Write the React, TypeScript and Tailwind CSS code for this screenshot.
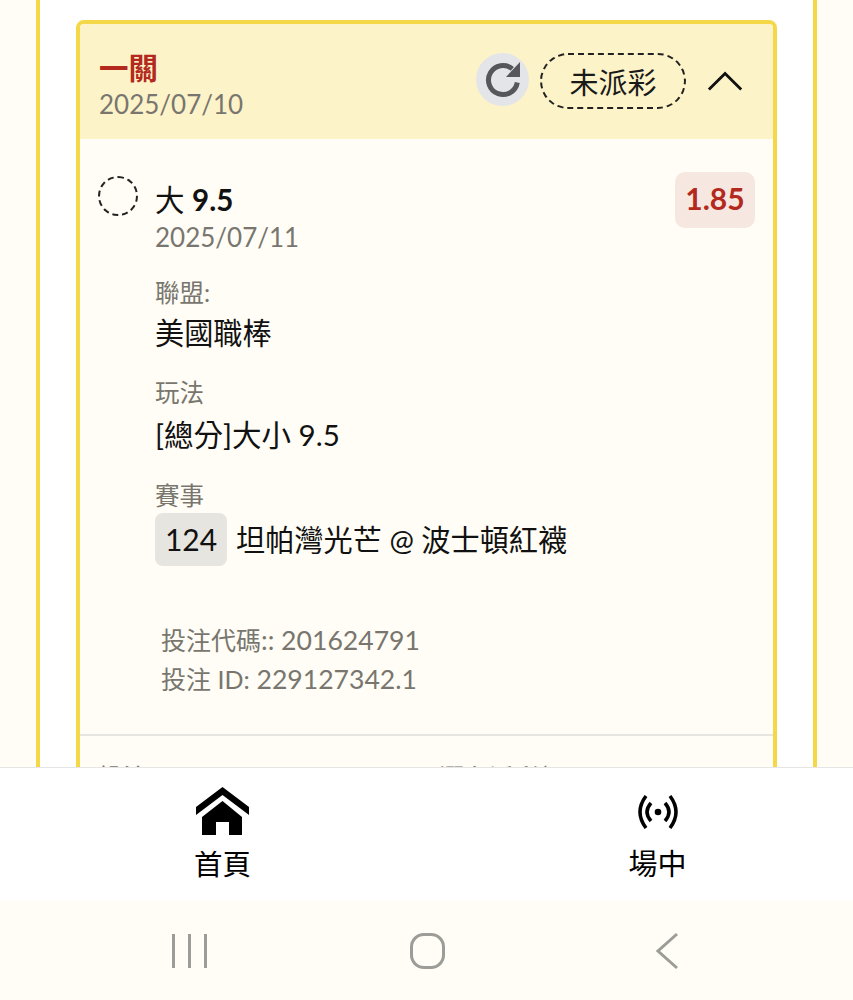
import React from 'react';

const FONT = "font-['Lato','Noto_Sans_CJK_TC',sans-serif]";

const Field: React.FC<{ label: string; className?: string; children: React.ReactNode }> = ({
  label,
  className,
  children,
}) => {
  return (
    <div className={className}>
      <div className="text-[24.5px] leading-[30px] text-[#78766f]">{label}</div>
      {children}
    </div>
  );
};

const App: React.FC = () => {
  return (
    <div className={`${FONT} h-[1000px] w-[853px] flex flex-col overflow-hidden bg-[#fffdf5]`}>
      {/* scroll area */}
      <div className="h-[767px] shrink-0 overflow-hidden px-[36px]">
        <div className="h-[900px] border-x-[4px] border-[#f5d848] bg-white px-[36px] pt-[20px]">
          <div className="rounded-t-[8px] border-[4px] border-[#f5d848] bg-[#fffdf5]">
            <div className="h-[115px] bg-[#fdf3c8] flex items-start justify-between pl-[19px] pr-[28px] rounded-t-[4px]">
              <div className="pt-[26px]">
                <div className="text-[29.5px] leading-[36px] font-bold text-[#b3291d]">一關</div>
                <div className="mt-[1px] text-[26px] leading-[34px] text-[#78766f]">2025/07/10</div>
              </div>
              <div className="flex items-center pt-[29px]">
                <div className="mb-[3px] w-[53px] h-[53px] rounded-full bg-[#e3e5e8]">
                  <svg viewBox="0 0 53 53" className="w-[53px] h-[53px]">
                    <path d="M41.3 29.5 A14.5 14.5 0 1 1 36.3 15.9" className="fill-none stroke-[#55575a] stroke-[5]" />
                    <path d="M44 9 L44 24 L30 24 Z" className="fill-[#55575a]" />
                  </svg>
                </div>
                <div className="ml-[11px] w-[146px] h-[56px] rounded-full border-2 border-dashed border-[#222] flex items-center justify-center text-[29px] leading-[40px] pt-[3px] text-[#1a1a1a]">
                  未派彩
                </div>
                <svg viewBox="0 0 40 24" className="ml-[21px] w-[38px] h-[24px] fill-none stroke-[#111] stroke-[3]">
                  <path d="M2 21 L19 4 L36 21" />
                </svg>
              </div>
            </div>

            <div className="relative pl-[18px] pr-[18px] pt-[33px] h-[700px]">
              <div className="flex items-start justify-between">
                <div className="flex items-start">
                  <div className="mt-[4px] w-[40px] h-[40px] rounded-full border-2 border-dashed border-[#222]" />
                  <div className="ml-[17px] pt-[8px]">
                    <div className="text-[29.5px] leading-[40px] text-[#111]">
                      大 <span className="font-bold">9.5</span>
                    </div>
                    <div className="mt-[1px] text-[26px] leading-[32px] text-[#78766f]">2025/07/11</div>
                  </div>
                </div>
                <div className="w-[80px] h-[56px] pb-[3px] rounded-[10px] bg-[#f6e8e0] flex items-center justify-center text-[30px] font-bold text-[#b3291d]">
                  1.85
                </div>
              </div>

              <div className="pl-[57px] text-[#111]">
                <Field label="聯盟:" className="mt-[25px]">
                  <div className="text-[29.2px] leading-[44px] mt-[3px]">美國職棒</div>
                </Field>
                <Field label="玩法" className="mt-[23px]">
                  <div className="text-[29.5px] leading-[44px] mt-[5px]">[總分]大小 9.5</div>
                </Field>
                <Field label="賽事" className="mt-[24px]">
                  <div className="flex items-center mt-[2px]">
                    <div className="w-[72px] h-[53px] rounded-[8px] bg-[#e6e5e0] flex items-center justify-center text-[30px]">
                      124
                    </div>
                    <div className="ml-[9px] text-[29.2px] leading-[53px]">坦帕灣光芒 @ 波士頓紅襪</div>
                  </div>
                </Field>
                <div className="mt-[55px] pl-[6px] text-[26.6px] leading-[39px] text-[#78766f]">
                  <div>
                    <span className="text-[25px]">投注代碼</span>:: 201624791
                  </div>
                  <div>
                    <span className="text-[25px]">投注 ID:</span> 229127342.1
                  </div>
                </div>
              </div>

              <div className="mt-[35px] -mx-[18px] border-t-2 border-[#e6e5e0]" />
              <div className="mt-[24px] flex text-[25px] leading-[34px] text-[#78766f]">
                <div className="w-[341px]">投注</div>
                <div>潛在派彩額</div>
              </div>
            </div>
          </div>
        </div>
      </div>

      {/* bottom nav */}
      <div className="h-[133px] shrink-0 bg-white border-t border-[#e5e5e5] flex">
        <div className="w-[444px] pl-[1px] flex flex-col items-center pt-[19px]">
          <svg viewBox="0 0 53 48" className="w-[53px] h-[48px] fill-black">
            <path d="M26.5 0 L53 20 L53 28 L26.5 8 L0 28 L0 20 Z" />
            <path d="M26.5 14 L46 30 L46 48 L33 48 L33 35 L20 35 L20 48 L6 48 L6 30 Z" />
          </svg>
          <div className="mt-[9px] text-[28.5px] leading-[40px] text-black">首頁</div>
        </div>
        <div className="flex-1 flex flex-col items-center pt-[27px] pl-[18px]">
          <svg viewBox="0 0 40 34" className="w-[40px] h-[34px] fill-none stroke-black stroke-[3.5]">
            <circle cx="20" cy="17" r="3.3" className="fill-black stroke-none" />
            <path d="M13 8 Q5 17 13 26" />
            <path d="M27 8 Q35 17 27 26" />
            <path d="M8 1 Q-4 17 8 33" />
            <path d="M32 1 Q44 17 32 33" />
          </svg>
          <div className="mt-[15px] text-[29px] leading-[40px] text-black">場中</div>
        </div>
      </div>

      {/* android system bar */}
      <div className="flex-1 bg-[#fffdf5] flex items-center">
        <div className="w-[207px] flex justify-end gap-[13px] pt-[2px]">
          <div className="w-[3px] h-[34px] bg-[#9c9c98]" />
          <div className="w-[3px] h-[34px] bg-[#9c9c98]" />
          <div className="w-[3px] h-[34px] bg-[#9c9c98]" />
        </div>
        <div className="ml-[203px] mt-[2px] w-[35px] h-[36px] rounded-[14px] border-[3px] border-[#9c9c98]" />
        <svg viewBox="0 0 24 38" className="ml-[210px] mt-[2px] w-[24px] h-[38px] fill-none stroke-[#9c9c98] stroke-[3]">
          <path d="M22 2 L3 19 L22 36" />
        </svg>
      </div>
    </div>
  );
};

export default App;
